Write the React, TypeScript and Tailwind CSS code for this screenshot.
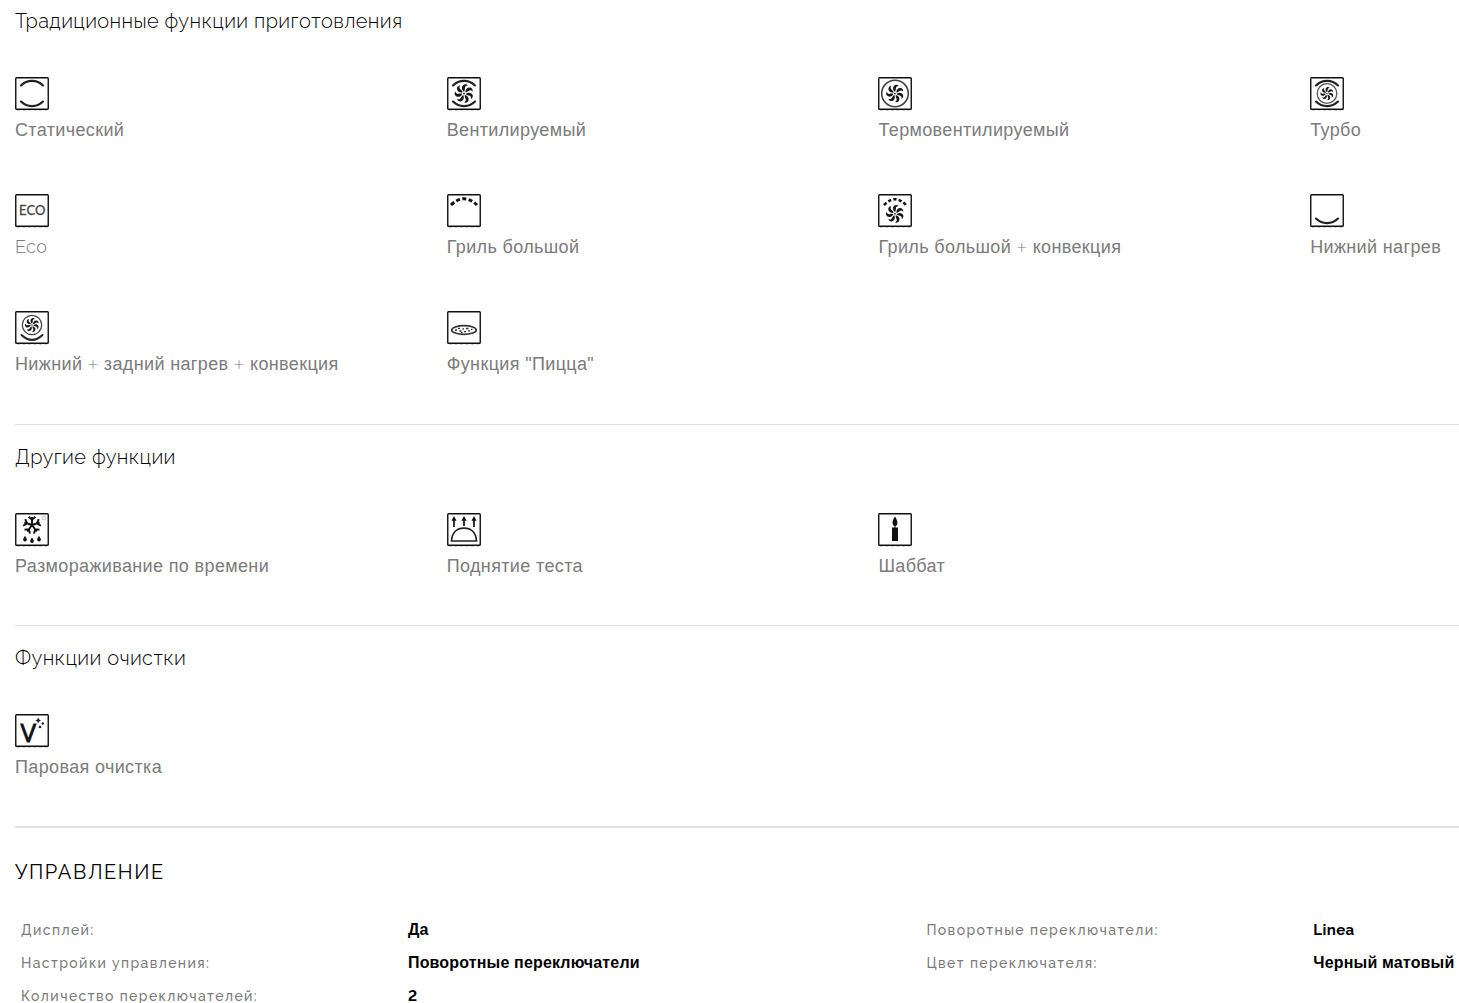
import React from "react";

type Feature = {
  label: string;
  icon: React.ReactNode;
};

type Spec = {
  name: string;
  value: string;
};

const BLADES = [0, 51, 103, 154, 206, 257, 309];

function Frame(props: { children: React.ReactNode }) {
  return (
    <svg viewBox="0 0 34 34" className="block h-[34px] w-[34px] overflow-visible" fill="none" stroke="#111" aria-hidden="true">
      <rect x="0.75" y="0.75" width="32.5" height="31.5" rx="0.8" strokeWidth="1.4" />
      <path d="M2 33.5h30" stroke="#c4c4c4" strokeWidth="0.8" strokeDasharray="3 2.5" />
      {props.children}
    </svg>
  );
}

function Fan(props: { cx?: number; cy?: number; scale?: number }) {
  const { cx = 17, cy = 16.5, scale = 1 } = props;
  return (
    <g transform={`translate(${cx} ${cy}) scale(${scale})`} fill="#161616" stroke="none">
      {BLADES.map((deg) => (
        <path key={deg} d="M0 -1.8C-2.4 -3.6 -2.8 -6.8 -0.6 -8.6C0.8 -9.6 2.8 -9.4 3.8 -8C1.8 -7.8 1 -7 0.9 -5.5C0.8 -4 0.9 -3 0 -1.8Z" transform={`rotate(${deg})`} />
      ))}
      <circle r="0.9" />
    </g>
  );
}

function TopArc() {
  return <path d="M6 8.4A15.5 15.5 0 0 1 28 8.4" stroke="#222" strokeWidth="2.2" strokeLinecap="round" />;
}

function BottomArc() {
  return <path d="M6 24.6A15.5 15.5 0 0 0 28 24.6" stroke="#222" strokeWidth="2.2" strokeLinecap="round" />;
}

const cooking: Feature[] = [
  {
    label: "Статический",
    icon: (
      <>
        <TopArc />
        <BottomArc />
      </>
    )
  },
  {
    label: "Вентилируемый",
    icon: (
      <>
        <TopArc />
        <Fan />
        <BottomArc />
      </>
    )
  },
  {
    label: "Термовентилируемый",
    icon: (
      <>
        <circle cx="17" cy="16.5" r="13.3" stroke="#444" strokeWidth="1.6" />
        <Fan scale={0.94} />
      </>
    )
  },
  {
    label: "Турбо",
    icon: (
      <>
        <TopArc />
        <circle cx="17" cy="16.5" r="9.8" stroke="#555" strokeWidth="1.3" />
        <Fan scale={0.7} />
        <BottomArc />
      </>
    )
  },
  {
    label: "Eco",
    icon: (
      <text x="17.2" y="20.8" textAnchor="middle" fill="#444" stroke="#444" strokeWidth="0.3" className="font-['Lato'] text-[13px]">
        ECO
      </text>
    )
  },
  {
    label: "Гриль большой",
    icon: <path d="M4 11Q17 -1.5 30 11" strokeWidth="3" strokeDasharray="4 2.5" />
  },
  {
    label: "Гриль большой + конвекция",
    icon: (
      <>
        <path d="M6 11Q17 -0.5 28 11" strokeWidth="2.6" strokeDasharray="3.2 2.3" />
        <Fan cy={19.8} scale={0.96} />
      </>
    )
  },
  {
    label: "Нижний нагрев",
    icon: <BottomArc />
  },
  {
    label: "Нижний + задний нагрев + конвекция",
    icon: (
      <>
        <circle cx="17" cy="14" r="9.7" stroke="#444" strokeWidth="1.3" />
        <Fan cy={14} scale={0.75} />
        <path d="M6.5 24Q17 33.8 27.5 24" stroke="#222" strokeWidth="2" strokeLinecap="round" />
      </>
    )
  },
  {
    label: 'Функция "Пицца"',
    icon: (
      <>
        <ellipse cx="17" cy="19" rx="12.3" ry="4.3" stroke="#333" strokeWidth="1.7" />
        <path d="M8 19h2M11 17.3h2M12.5 20h2M15.5 18h1.5M17 20.7h2M19 17.5h2.5M21 19.8h2M24 18.3h1.5M14 21.5h1.5" stroke="#333" strokeWidth="1.3" />
      </>
    )
  }
];

const other: Feature[] = [
  {
    label: "Размораживание по времени",
    icon: (
      <>
        {[0, 72, 144, 216, 288].map((deg) => (
          <path key={deg} d="M0 0V-8M-3.4 -8.2L0 -5.2L3.4 -8.2" strokeWidth="1.9" transform={`translate(17 12) rotate(${deg})`} />
        ))}
        <path d="M10 22.7l1.7 3a1.9 1.9 0 1 1-3.4 0zM17 24.2l1.7 3a1.9 1.9 0 1 1-3.4 0zM24 22.7l1.7 3a1.9 1.9 0 1 1-3.4 0z" fill="#111" stroke="none" />
        <circle cx="29" cy="5" r="1.9" stroke="#bbb" strokeWidth="0.9" />
      </>
    )
  },
  {
    label: "Поднятие теста",
    icon: (
      <>
        <path d="M4.5 28C5 19.5 10 15.2 17 15.2S29 19.5 29.5 28Z" stroke="#222" strokeWidth="1.7" strokeLinejoin="round" />
        <path d="M7 14V6M17 13V6M27 14V6" strokeWidth="1.7" />
        <path d="M7 3l2.5 4.7h-5zM17 3l2.5 4.7h-5zM27 3l2.5 4.7h-5z" fill="#111" stroke="none" />
      </>
    )
  },
  {
    label: "Шаббат",
    icon: (
      <>
        <rect x="14" y="14.5" width="6" height="13.5" fill="#111" stroke="none" />
        <path d="M17 3.5C20.3 8.5 20.2 12 17 13.2C13.8 12 13.7 8.5 17 3.5Z" fill="#111" stroke="none" />
        <path d="M17 12v3" strokeWidth="0.9" />
      </>
    )
  }
];

const cleaning: Feature[] = [
  {
    label: "Паровая очистка",
    icon: (
      <>
        <text x="13.2" y="28.4" textAnchor="middle" fill="#111" stroke="#111" strokeWidth="0.8" className="font-['Open_Sans'] text-[26px] leading-none">
          V
        </text>
        <g fill="#222" stroke="none">
          <path d="M23.2 3.6l1 1.8 1.8 1-1.8 1-1 1.8-1-1.8-1.8-1 1.8-1z" />
          <circle cx="27.8" cy="9.5" r="1.2" />
          <circle cx="25" cy="13" r="1.3" />
        </g>
      </>
    )
  }
];

const specs: Spec[][] = [
  [
    { name: "Дисплей:", value: "Да" },
    { name: "Поворотные переключатели:", value: "Linea" }
  ],
  [
    { name: "Настройки управления:", value: "Поворотные переключатели" },
    { name: "Цвет переключателя:", value: "Черный матовый" }
  ],
  [{ name: "Количество переключателей:", value: "2" }]
];

// latin words and digits are set in the display face, cyrillic in the body face
function Mixed(props: { text: string; className: string }) {
  return (
    <>
      {props.text.split(/([A-Za-z0-9]+|\+)/).map((part, i) => {
        if (i % 2 === 0) return part;
        return (
          <span key={i} className={part === "+" ? "font-['Lato',sans-serif] leading-none font-light" : props.className}>
            {part}
          </span>
        );
      })}
    </>
  );
}

function FeatureSection(props: { title: string; items: Feature[]; className: string }) {
  return (
    <section className={props.className}>
      <h3 className="mb-[42px] font-['Raleway','Lato',sans-serif] text-xl leading-7 font-light tracking-[0.02em] text-black">{props.title}</h3>
      <ul className="grid grid-cols-[29fr_29fr_29fr_10fr] gap-y-[53px]">
        {props.items.map((f) => (
          <li key={f.label}>
            <Frame>{f.icon}</Frame>
            <div className="mt-2 font-['Liberation_Sans',Arial,sans-serif] text-lg leading-[22px] tracking-[0.02em] whitespace-nowrap text-[#7b7b7b]">
              <Mixed text={f.label} className="font-['Raleway','Lato',sans-serif] font-light" />
            </div>
          </li>
        ))}
      </ul>
    </section>
  );
}

export default function App() {
  return (
    <main className="overflow-hidden bg-white pl-[15px]">
      <FeatureSection title="Традиционные функции приготовления" items={cooking} className="pt-[7px] pb-[49px]" />
      <FeatureSection title="Другие функции" items={other} className="border-t border-[#dedede] pt-[18px] pb-12" />
      <FeatureSection title="Функции очистки" items={cleaning} className="border-t border-[#dedede] pt-[18px] pb-12" />

      <section className="border-t-2 border-[#dedede] pt-[30px]">
        <h2 className="mb-[27px] font-['Raleway','Lato',sans-serif] text-xl leading-7 tracking-[0.08em] text-black uppercase">Управление</h2>
        <table className="w-full table-fixed text-left">
          <colgroup>
            <col className="w-[26.8%]" />
            <col className="w-[35.9%]" />
            <col className="w-[26.8%]" />
            <col />
          </colgroup>
          <tbody>
            {specs.map((row) => (
              <tr key={row[0].name} className="h-[33px]">
                {row.map((s) => (
                  <React.Fragment key={s.name}>
                    <th scope="row" className="pl-[6px] font-['Raleway','Lato',sans-serif] text-sm font-medium tracking-widest whitespace-nowrap text-[#7b7b7b]">
                      {s.name}
                    </th>
                    <td className="pl-[6px] font-['Liberation_Sans',Arial,sans-serif] text-base font-bold tracking-[0.01em] whitespace-nowrap text-black">
                      <Mixed text={s.value} className="font-['Raleway','Lato',sans-serif] text-[15px] tracking-wide lining-nums" />
                    </td>
                  </React.Fragment>
                ))}
              </tr>
            ))}
          </tbody>
        </table>
      </section>
    </main>
  );
}
